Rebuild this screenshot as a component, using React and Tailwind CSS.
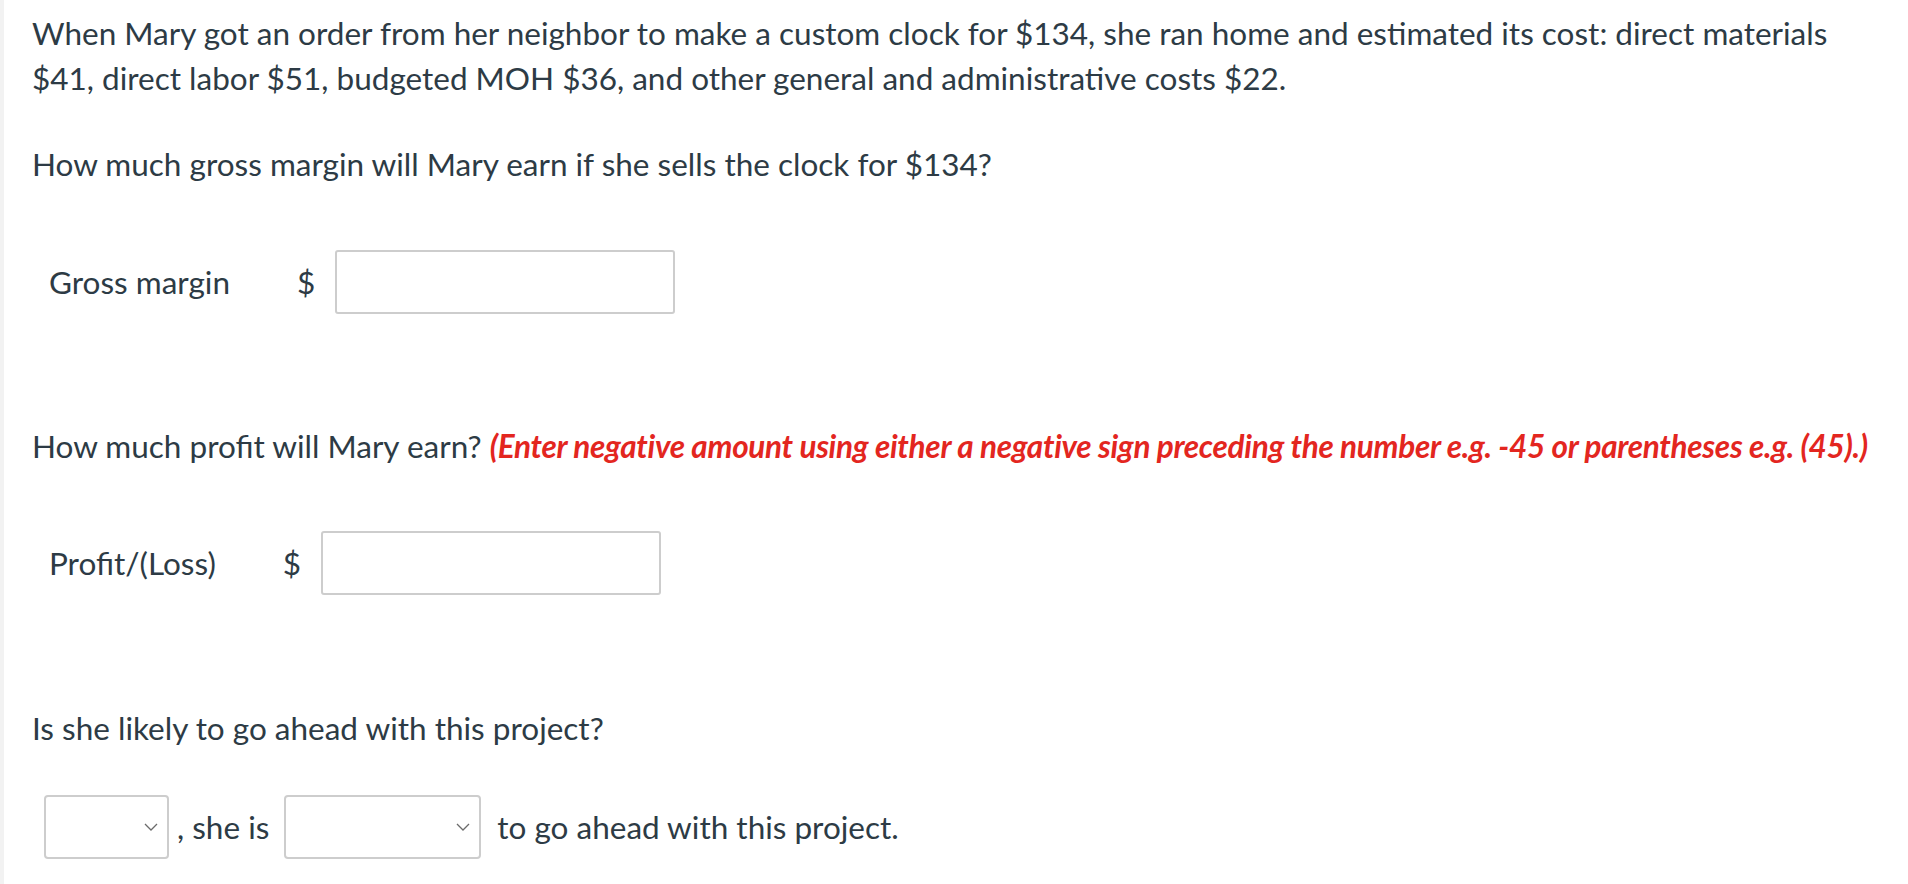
import React from "react";

function Chevron() {
  return (
    <svg width="14" height="8" viewBox="0 0 14 8" className="pointer-events-none absolute right-[9px] top-1/2 -translate-y-1/2">
      <path d="M1 1 L7 7 L13 1" fill="none" stroke="#6b6b6b" strokeWidth="1.3" />
    </svg>
  );
}

function Select({ width }) {
  return (
    <div className={`relative h-[64px] ${width} rounded-[4px] border-2 border-[#cdcdcd] bg-white`}>
      <Chevron />
    </div>
  );
}

function AmountRow({ label }) {
  return (
    <div className="flex items-center pl-[17px]">
      <span className="mr-[67px]">{label}</span>
      <span className="mr-[20px]">$</span>
      <div className="h-[64px] w-[340px] rounded-[3px] border-2 border-[#cdcdcd] bg-white" />
    </div>
  );
}

export default function App() {
  return (
    <div
      className="min-h-screen bg-white border-l-4 border-[#f2f2f2] pl-[28px] pt-[11px] text-[31.5px] leading-[45px] text-[#2d3b45]"
      style={{ fontFamily: "Lato, 'Open Sans', sans-serif" }}
    >
      <p className="whitespace-nowrap">
        When Mary got an order from her neighbor to make a custom clock for $134, she ran home and estimated its cost: direct materials
        <br />
        $41, direct labor $51, budgeted MOH $36, and other general and administrative costs $22.
      </p>

      <p className="mt-[41px]">How much gross margin will Mary earn if she sells the clock for $134?</p>

      <div className="mt-[63px]">
        <AmountRow label="Gross margin" />
      </div>

      <p className="mt-[110px] whitespace-nowrap">
        How much profit will Mary earn?{" "}
        <span className="font-bold italic tracking-[-0.3px] text-[#e3261f]">
          (Enter negative amount using either a negative sign preceding the number e.g. -45 or parentheses e.g. (45).)
        </span>
      </p>

      <div className="mt-[62px]">
        <AmountRow label="Profit/(Loss)" />
      </div>

      <p className="mt-[111px]">Is she likely to go ahead with this project?</p>

      <div className="mt-[44px] flex items-center pl-[12px]">
        <Select width="w-[125px]" />
        <span className="ml-[8px] mr-[15px]">, she is</span>
        <Select width="w-[197px]" />
        <span className="ml-[16px]">to go ahead with this project.</span>
      </div>
    </div>
  );
}
